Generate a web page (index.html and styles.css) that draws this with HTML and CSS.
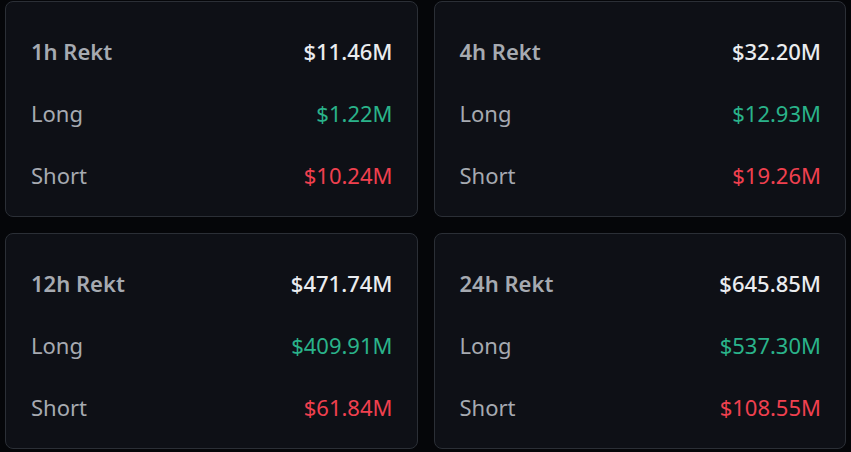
FILE: index.html
```html
<!DOCTYPE html>
<html lang="en">
<head>
<meta charset="utf-8">
<title>Rekt</title>
<link rel="stylesheet" href="styles.css">
</head>
<body>
<div class="grid">
  <section class="card">
    <div class="row head"><span class="label">1h Rekt</span><span class="value total">$11.46M</span></div>
    <div class="row"><span class="label">Long</span><span class="value long">$1.22M</span></div>
    <div class="row"><span class="label">Short</span><span class="value short">$10.24M</span></div>
  </section>
  <section class="card">
    <div class="row head"><span class="label">4h Rekt</span><span class="value total">$32.20M</span></div>
    <div class="row"><span class="label">Long</span><span class="value long">$12.93M</span></div>
    <div class="row"><span class="label">Short</span><span class="value short">$19.26M</span></div>
  </section>
  <section class="card">
    <div class="row head"><span class="label">12h Rekt</span><span class="value total">$471.74M</span></div>
    <div class="row"><span class="label">Long</span><span class="value long">$409.91M</span></div>
    <div class="row"><span class="label">Short</span><span class="value short">$61.84M</span></div>
  </section>
  <section class="card">
    <div class="row head"><span class="label">24h Rekt</span><span class="value total">$645.85M</span></div>
    <div class="row"><span class="label">Long</span><span class="value long">$537.30M</span></div>
    <div class="row"><span class="label">Short</span><span class="value short">$108.55M</span></div>
  </section>
</div>
</body>
</html>
```
FILE: styles.css
```css
html, body {
  margin: 0;
  background: #050609;
}
body {
  padding: 1px 5px 0 5px;
  font-family: "Noto Sans", "Inter", sans-serif;
}
.grid {
  display: grid;
  grid-template-columns: 1fr 1fr;
  gap: 16px;
}
.card {
  box-sizing: border-box;
  height: 216px;
  background: #0e1016;
  border: 1px solid #2b2f36;
  border-radius: 8px;
  padding: 33px 24px 0 25px;
  display: flex;
  flex-direction: column;
  gap: 30px;
}
.row {
  display: flex;
  justify-content: space-between;
  align-items: center;
  height: 32px;
  font-size: 22px;
  line-height: 32px;
}
.label {
  color: #a6aab1;
}
.head .label {
  font-weight: 600;
}
.value.total {
  color: #eaecef;
  font-weight: 500;
}
.value.long {
  color: #2ab38a;
}
.value.short {
  color: #f0404f;
}
```
